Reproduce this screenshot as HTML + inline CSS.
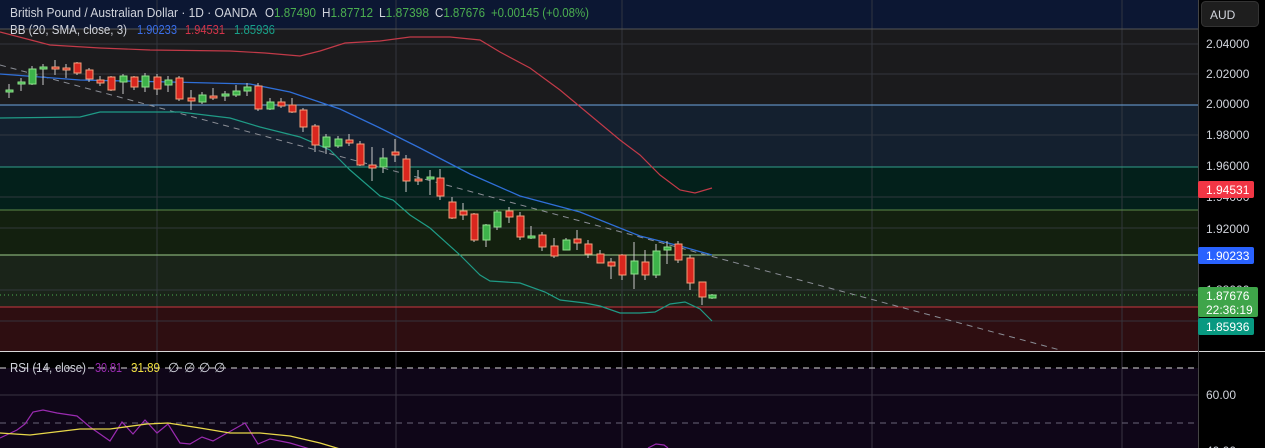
<!DOCTYPE html>
<html><head><meta charset="utf-8"><style>
body{margin:0;width:1265px;height:448px;overflow:hidden;background:#000;font-family:"Liberation Sans",sans-serif}
svg{display:block}
</style></head><body>
<svg width="1265" height="448" xmlns="http://www.w3.org/2000/svg" font-family="Liberation Sans, sans-serif">
<rect x="0" y="0" width="1198" height="29" fill="#0c1733"/>
<rect x="0" y="29" width="1198" height="76" fill="#1b1b1d"/>
<rect x="0" y="105" width="1198" height="62" fill="#14202f"/>
<rect x="0" y="167" width="1198" height="43" fill="#03201b"/>
<rect x="0" y="210" width="1198" height="45" fill="#13200f"/>
<rect x="0" y="255" width="1198" height="52" fill="#1a2419"/>
<rect x="0" y="307" width="1198" height="44" fill="#2e0e11"/>
<g stroke="#3a3d45" stroke-width="1" opacity="0.8">
<line x1="0" y1="44" x2="1198" y2="44"/><line x1="0" y1="74" x2="1198" y2="74"/>
<line x1="0" y1="135" x2="1198" y2="135"/><line x1="0" y1="197" x2="1198" y2="197"/>
<line x1="0" y1="228" x2="1198" y2="228"/><line x1="0" y1="290" x2="1198" y2="290"/>
<line x1="0" y1="321" x2="1198" y2="321"/>
<line x1="157" y1="0" x2="157" y2="351"/><line x1="396" y1="0" x2="396" y2="351"/><line x1="622" y1="0" x2="622" y2="351"/>
<line x1="872" y1="0" x2="872" y2="351"/><line x1="1122" y1="0" x2="1122" y2="351"/>
</g>
<line x1="0" y1="29" x2="1198" y2="29" stroke="#555" />
<line x1="0" y1="105" x2="1198" y2="105" stroke="#6ea6e0"/>
<line x1="0" y1="167" x2="1198" y2="167" stroke="#2f9e8a"/>
<line x1="0" y1="210" x2="1198" y2="210" stroke="#5c8a4a"/>
<line x1="0" y1="255" x2="1198" y2="255" stroke="#9ccc8a"/>
<line x1="0" y1="307" x2="1198" y2="307" stroke="#c8363e"/>
<line x1="0" y1="295" x2="1198" y2="295" stroke="#4caf50" stroke-dasharray="1 3"/>
<line x1="0" y1="65" x2="1060" y2="350" stroke="#8a8d95" stroke-dasharray="6 5"/>
<polyline fill="none" stroke="#c23a48" stroke-width="1.2" points="0,32 50,45 100,48 150,50 230,51 265,53 300,56 320,51 345,43 380,41 410,37 450,37 480,40 500,52 530,68 560,90 590,115 620,140 640,155 660,175 680,190 695,193 712,188"/>
<polyline fill="none" stroke="#2f6fd8" stroke-width="1.3" points="0,74 80,80 170,82 250,84 290,92 340,109 380,128 420,148 470,174 520,196 580,212 640,236 680,246 712,255"/>
<polyline fill="none" stroke="#1f9b86" stroke-width="1.2" points="0,118 80,117 100,112 180,112 230,118 260,127 300,137 330,150 350,170 380,196 393,200 410,215 430,228 460,255 480,275 490,281 520,283 545,292 560,300 585,303 600,306 620,313 640,313 655,312 670,304 685,302 700,309 712,321"/>
<g stroke="#c9c9c9" stroke-width="1">
<line x1="9" y1="84" x2="9" y2="98"/><line x1="21" y1="78" x2="21" y2="91"/><line x1="32" y1="66" x2="32" y2="85"/><line x1="43" y1="64" x2="43" y2="85"/><line x1="55" y1="60" x2="55" y2="75"/><line x1="66" y1="64" x2="66" y2="78"/><line x1="77" y1="62" x2="77" y2="75"/><line x1="89" y1="68" x2="89" y2="82"/><line x1="100" y1="76" x2="100" y2="86"/><line x1="111" y1="76" x2="111" y2="91"/><line x1="123" y1="74" x2="123" y2="94"/><line x1="134" y1="76" x2="134" y2="90"/><line x1="145" y1="73" x2="145" y2="92"/><line x1="157" y1="74" x2="157" y2="95"/><line x1="168" y1="76" x2="168" y2="92"/><line x1="179" y1="76" x2="179" y2="101"/><line x1="191" y1="90" x2="191" y2="110"/><line x1="202" y1="92" x2="202" y2="104"/><line x1="213" y1="88" x2="213" y2="100"/><line x1="225" y1="91" x2="225" y2="101"/><line x1="236" y1="85" x2="236" y2="97"/><line x1="247" y1="83" x2="247" y2="96"/><line x1="258" y1="83" x2="258" y2="111"/><line x1="270" y1="98" x2="270" y2="110"/><line x1="281" y1="98" x2="281" y2="108"/><line x1="292" y1="98" x2="292" y2="113"/><line x1="303" y1="108" x2="303" y2="132"/><line x1="315" y1="124" x2="315" y2="152"/><line x1="326" y1="134" x2="326" y2="154"/><line x1="338" y1="136" x2="338" y2="148"/><line x1="349" y1="134" x2="349" y2="146"/><line x1="360" y1="141" x2="360" y2="166"/><line x1="372" y1="147" x2="372" y2="181"/><line x1="383" y1="148" x2="383" y2="173"/><line x1="395" y1="139" x2="395" y2="162"/><line x1="406" y1="155" x2="406" y2="192"/><line x1="418" y1="170" x2="418" y2="185"/><line x1="430" y1="170" x2="430" y2="195"/><line x1="440" y1="169" x2="440" y2="200"/><line x1="452" y1="197" x2="452" y2="219"/><line x1="463" y1="203" x2="463" y2="220"/><line x1="474" y1="213" x2="474" y2="242"/><line x1="486" y1="224" x2="486" y2="247"/><line x1="497" y1="210" x2="497" y2="230"/><line x1="509" y1="207" x2="509" y2="223"/><line x1="520" y1="212" x2="520" y2="240"/><line x1="531" y1="226" x2="531" y2="239"/><line x1="542" y1="232" x2="542" y2="251"/><line x1="554" y1="238" x2="554" y2="258"/><line x1="566" y1="238" x2="566" y2="250"/><line x1="577" y1="230" x2="577" y2="250"/><line x1="588" y1="240" x2="588" y2="258"/><line x1="600" y1="250" x2="600" y2="263"/><line x1="611" y1="258" x2="611" y2="279"/><line x1="622" y1="254" x2="622" y2="280"/><line x1="634" y1="242" x2="634" y2="289"/><line x1="645" y1="250" x2="645" y2="280"/><line x1="656" y1="244" x2="656" y2="278"/><line x1="667" y1="241" x2="667" y2="264"/><line x1="678" y1="241" x2="678" y2="263"/><line x1="690" y1="255" x2="690" y2="290"/><line x1="702" y1="282" x2="702" y2="305"/><line x1="712" y1="294" x2="712" y2="299"/>
</g>
<g fill="#3db34a" stroke="#8ee08a" stroke-width="1">
<rect x="6" y="90" width="7" height="2"/><rect x="18" y="82" width="7" height="2"/><rect x="29" y="69" width="7" height="15"/><rect x="40" y="67" width="7" height="2"/><rect x="120" y="76" width="7" height="6"/><rect x="142" y="76" width="7" height="11"/><rect x="165" y="80" width="7" height="5"/><rect x="199" y="95" width="7" height="7"/><rect x="222" y="94" width="7" height="2"/><rect x="233" y="91" width="7" height="4"/><rect x="244" y="87" width="7" height="4"/><rect x="267" y="102" width="7" height="7"/><rect x="323" y="137" width="7" height="10"/><rect x="335" y="139" width="7" height="7"/><rect x="380" y="158" width="7" height="9"/><rect x="427" y="177" width="7" height="2"/><rect x="483" y="225" width="7" height="15"/><rect x="494" y="212" width="7" height="15"/><rect x="528" y="236" width="7" height="2"/><rect x="563" y="240" width="7" height="10"/><rect x="631" y="261" width="7" height="13"/><rect x="653" y="251" width="7" height="24"/><rect x="664" y="247" width="7" height="3"/><rect x="709" y="295" width="7" height="3"/>
</g>
<g fill="#d9261e" stroke="#f3a07c" stroke-width="1">
<rect x="52" y="67" width="7" height="2"/><rect x="63" y="68" width="7" height="2"/><rect x="74" y="63" width="7" height="10"/><rect x="86" y="70" width="7" height="9"/><rect x="97" y="80" width="7" height="3"/><rect x="108" y="77" width="7" height="13"/><rect x="131" y="77" width="7" height="10"/><rect x="154" y="77" width="7" height="12"/><rect x="176" y="78" width="7" height="21"/><rect x="188" y="98" width="7" height="3"/><rect x="210" y="96" width="7" height="2"/><rect x="255" y="86" width="7" height="23"/><rect x="278" y="102" width="7" height="4"/><rect x="289" y="105" width="7" height="7"/><rect x="300" y="110" width="7" height="17"/><rect x="312" y="126" width="7" height="19"/><rect x="346" y="140" width="7" height="3"/><rect x="357" y="144" width="7" height="21"/><rect x="369" y="165" width="7" height="3"/><rect x="392" y="152" width="7" height="3"/><rect x="403" y="159" width="7" height="22"/><rect x="415" y="179" width="7" height="2"/><rect x="437" y="178" width="7" height="18"/><rect x="449" y="202" width="7" height="16"/><rect x="460" y="211" width="7" height="4"/><rect x="471" y="214" width="7" height="26"/><rect x="506" y="211" width="7" height="6"/><rect x="517" y="216" width="7" height="21"/><rect x="539" y="235" width="7" height="12"/><rect x="551" y="246" width="7" height="10"/><rect x="574" y="239" width="7" height="4"/><rect x="585" y="244" width="7" height="10"/><rect x="597" y="254" width="7" height="9"/><rect x="608" y="262" width="7" height="4"/><rect x="619" y="255" width="7" height="20"/><rect x="642" y="262" width="7" height="13"/><rect x="675" y="244" width="7" height="16"/><rect x="687" y="258" width="7" height="25"/><rect x="699" y="282" width="7" height="15"/>
</g>
<!-- legend -->
<g font-size="13" fill="#d1d4dc">
<text x="10" y="17" textLength="247" lengthAdjust="spacingAndGlyphs">British Pound / Australian Dollar · 1D · OANDA</text>
<text x="265" y="17" textLength="51" lengthAdjust="spacingAndGlyphs">O<tspan fill="#4caf50">1.87490</tspan></text>
<text x="322" y="17" textLength="51" lengthAdjust="spacingAndGlyphs">H<tspan fill="#4caf50">1.87712</tspan></text>
<text x="379" y="17" textLength="50" lengthAdjust="spacingAndGlyphs">L<tspan fill="#4caf50">1.87398</tspan></text>
<text x="435" y="17" textLength="50" lengthAdjust="spacingAndGlyphs">C<tspan fill="#4caf50">1.87676</tspan></text>
<text x="491" y="17" fill="#4caf50" textLength="98" lengthAdjust="spacingAndGlyphs">+0.00145 (+0.08%)</text>
<text x="10" y="34" textLength="117" lengthAdjust="spacingAndGlyphs">BB (20, SMA, close, 3)</text>
<text x="137" y="34" fill="#3a6ee8" textLength="40" lengthAdjust="spacingAndGlyphs">1.90233</text>
<text x="185" y="34" fill="#d2344a" textLength="40" lengthAdjust="spacingAndGlyphs">1.94531</text>
<text x="234" y="34" fill="#18a08a" textLength="41" lengthAdjust="spacingAndGlyphs">1.85936</text>
</g>
<!-- RSI pane -->
<rect x="0" y="352" width="1198" height="96" fill="#0f0618"/>
<rect x="0" y="352" width="1198" height="16" fill="#000"/>
<g stroke="#3a3442"><line x1="0" y1="395" x2="1198" y2="395"/><line x1="157" y1="352" x2="157" y2="448"/><line x1="396" y1="352" x2="396" y2="448"/><line x1="622" y1="352" x2="622" y2="448"/><line x1="872" y1="352" x2="872" y2="448"/><line x1="1122" y1="352" x2="1122" y2="448"/></g>
<line x1="0" y1="368" x2="1198" y2="368" stroke="#d8d8d8" stroke-dasharray="6 5"/>
<line x1="0" y1="423" x2="1198" y2="423" stroke="#6a6478" stroke-dasharray="6 5"/>
<polyline fill="none" stroke="#9a2bb0" stroke-width="1.2" points="0,438 17,430 25,424 33,412 43,410 57,413 77,416 90,427 110,441 122,422 133,434 145,420 157,433 168,424 180,443 190,444 202,437 213,441 245,423 258,444 270,439 290,443 310,449"/>
<polyline fill="none" stroke="#9a2bb0" stroke-width="1.2" points="648,448 656,444 664,445 668,448"/>
<polyline fill="none" stroke="#e8d84a" stroke-width="1.3" points="0,433 30,435 80,429 110,429 147,424 168,423 200,428 230,433 260,433 290,436 320,443 340,449"/>
<g font-size="13" fill="#d1d4dc">
<text x="10" y="372" textLength="76" lengthAdjust="spacingAndGlyphs">RSI (14, close)</text>
<text x="95" y="372" fill="#9a2bb0" textLength="27" lengthAdjust="spacingAndGlyphs">30.81</text>
<text x="131" y="372" fill="#f0e040" textLength="29" lengthAdjust="spacingAndGlyphs">31.89</text>
<text x="168" y="372">∅</text><text x="184" y="372">∅</text><text x="199" y="372">∅</text><text x="214" y="372">∅</text>
</g>
<line x1="0" y1="351.5" x2="1265" y2="351.5" stroke="#d8d8d8"/>
<!-- price axis -->
<rect x="1198" y="0" width="67" height="351" fill="#000"/>
<rect x="1198" y="352" width="67" height="96" fill="#000"/>
<line x1="1198.5" y1="0" x2="1198.5" y2="448" stroke="#444"/>
<rect x="1201.5" y="1.5" width="57" height="25" rx="4" fill="#1e1e1e" stroke="#333"/>
<text x="1210" y="19" font-size="12" fill="#d1d4dc">AUD</text>
<g font-size="12" fill="#d1d4dc">
<text x="1206" y="48">2.04000</text><text x="1206" y="78">2.02000</text><text x="1206" y="108">2.00000</text><text x="1206" y="139">1.98000</text><text x="1206" y="170">1.96000</text><text x="1206" y="201">1.94000</text><text x="1206" y="233">1.92000</text><text x="1206" y="294">1.88000</text><text x="1206" y="399">60.00</text><text x="1206" y="455">40.00</text>
</g>
<rect x="1198" y="181" width="56" height="17" rx="2" fill="#f23645"/>
<text x="1206" y="194" font-size="12" fill="#fff">1.94531</text>
<rect x="1198" y="247" width="56" height="17" rx="2" fill="#2962ff"/>
<text x="1206" y="260" font-size="12" fill="#fff">1.90233</text>
<rect x="1198" y="287" width="60" height="30" rx="2" fill="#3fa54a"/>
<text x="1206" y="300" font-size="12" fill="#fff">1.87676</text>
<text x="1206" y="314" font-size="12" fill="#fff">22:36:19</text>
<rect x="1198" y="318" width="56" height="17" rx="2" fill="#089981"/>
<text x="1206" y="331" font-size="12" fill="#fff">1.85936</text>
</svg>
</body></html>
